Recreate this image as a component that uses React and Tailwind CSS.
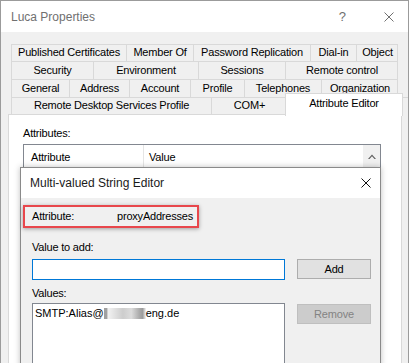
import React from 'react';

const tabRows = [
  {
    h: 'h-[17px]',
    tabs: [
      ['Published Certificates', 'w-[115px]'],
      ['Member Of', 'w-[67px]'],
      ['Password Replication', 'w-[117px]'],
      ['Dial-in', 'w-[46px]'],
      ['Object', 'w-[42px]'],
    ],
  },
  {
    h: 'h-[18px]',
    tabs: [
      ['Security', 'w-[82px]'],
      ['Environment', 'w-[105px]'],
      ['Sessions', 'w-[87px]'],
      ['Remote control', 'w-[113px]'],
    ],
  },
  {
    h: 'h-[18px]',
    tabs: [
      ['General', 'w-[58px]'],
      ['Address', 'w-[60px]'],
      ['Account', 'w-[61px]'],
      ['Profile', 'w-[54px]'],
      ['Telephones', 'w-[77px]'],
      ['Organization', 'w-[77px]'],
    ],
  },
];

const CloseIcon = ({ className }) => (
  <svg width="10" height="10" viewBox="0 0 10 10" className={className}>
    <path d="M0.5 0.5 L9.5 9.5 M9.5 0.5 L0.5 9.5" stroke="currentColor" strokeWidth="1" fill="none" />
  </svg>
);

const Tab = ({ label, w }) => (
  <div className={`${w} shrink-0 flex items-center justify-center border-l border-[#d9d9d9] pb-px whitespace-nowrap`}>
    {label}
  </div>
);

export default function App() {
  return (
    <div className="w-[409px] h-[363px] overflow-hidden bg-[#f0f0f0] border-l border-t border-r border-[#9b9b9b] font-['Liberation_Sans',Arial,sans-serif] text-[11px] tracking-[-0.2px] text-black flex flex-col">
      {/* window title bar */}
      <div className="h-[31px] shrink-0 bg-white flex items-center pl-[10px] text-[12px] tracking-normal text-[#707070]">
        <span className="flex-1">Luca Properties</span>
        <span className="text-[13px] mr-[38px]">?</span>
        <CloseIcon className="mr-[14px]" />
      </div>

      {/* tabs */}
      <div className="pt-[12px] pl-[10px] shrink-0 relative z-10">
        {tabRows.map((row, i) => (
          <div key={i} className={`${row.h} w-[387px] flex border-t border-r border-[#d9d9d9]`}>
            {row.tabs.map(([label, w]) => (
              <Tab key={label} label={label} w={w} />
            ))}
          </div>
        ))}
        <div className="h-[17px] flex border-t border-[#d9d9d9]">
          <Tab label="Remote Desktop Services Profile" w="w-[200px]" />
          <Tab label="COM+" w="w-[76px]" />
          <div className="-ml-[2px] -mt-[5px] w-[118px] h-[23px] shrink-0 bg-white border-l border-r border-t border-[#d9d9d9] flex justify-center pt-[1px] whitespace-nowrap">
            Attribute Editor
          </div>
        </div>
      </div>

      {/* attribute editor page */}
      <div className="ml-[7px] w-[394px] flex-1 bg-white border border-[#d9d9d9] relative">
        <div className="pl-[14px] pt-[11px] leading-[14px]">Attributes:</div>
        <div className="mt-[4px] ml-[14px] w-[358px] h-[240px] border border-[#828790] flex">
          <div className="flex-1 flex h-[24px] items-center">
            <div className="w-[120px] h-full flex items-center pl-[7px] border-r border-[#e5e5e5]">Attribute</div>
            <div className="pl-[5px]">Value</div>
          </div>
          <div className="w-[17px] bg-[#f0f0f0] flex justify-center pt-[9px]">
            <svg width="8" height="5" viewBox="0 0 8 5">
              <path d="M0 5 L4 0.5 L8 5 L6.5 5 L4 2.3 L1.5 5 Z" fill="#606060" />
            </svg>
          </div>
        </div>

        {/* Multi-valued String Editor dialog */}
        <div className="absolute left-[11px] top-[52px] w-[361px] h-[230px] border border-[#8a8a8a] bg-[#f0f0f0] shadow-[0_0_6px_rgba(0,0,0,0.25)] flex flex-col">
          <div className="h-[30px] shrink-0 bg-white flex items-center pl-[9px] text-[12px] tracking-normal text-[#1a1a1a]">
            <span className="flex-1">Multi-valued String Editor</span>
            <CloseIcon className="mr-[9px] text-[#111]" />
          </div>
          <div className="pt-[7px]">
            <div className="ml-[2px] w-[176px] h-[23px] border-2 border-[#e8474c] shadow-[0_1px_4px_rgba(0,0,0,0.35)] flex items-center pl-[7px]">
              <span className="w-[85px]">Attribute:</span>
              <span>proxyAddresses</span>
            </div>
            <div className="ml-[11px] mt-[12px] leading-[14px]">Value to add:</div>
            <div className="ml-[11px] mt-[5px] flex items-start">
              <div className="w-[253px] h-[21px] bg-white border border-[#0078d7]" />
              <button className="ml-[12px] w-[74px] h-[20px] bg-[#e1e1e1] border border-[#adadad] flex items-center justify-center">
                Add
              </button>
            </div>
            <div className="ml-[11px] mt-[6px] leading-[14px]">Values:</div>
            <div className="ml-[11px] mt-[3px] flex items-start">
              <div className="w-[253px] h-[100px] bg-white border border-[#828790] pl-[2px] pt-[2px] leading-[14px] tracking-normal flex items-start">
                <span>SMTP:Alias@</span>
                <span className="mt-[2px] w-[42px] h-[11px] bg-[linear-gradient(90deg,#a0a0a0_0%,#a0a0a0_6%,#f2f2f2_10%,#e2e2e2_25%,#cdcdcd_45%,#dcdcdc_65%,#a9a9a9_85%,#9c9c9c_92%,#f7f7f7_100%)]" />
                <span>eng.de</span>
              </div>
              <button className="ml-[12px] mt-[1px] w-[74px] h-[20px] bg-[#cccccc] border border-[#bfbfbf] text-[#838383] flex items-center justify-center">
                Remove
              </button>
            </div>
          </div>
        </div>
      </div>
    </div>
  );
}
